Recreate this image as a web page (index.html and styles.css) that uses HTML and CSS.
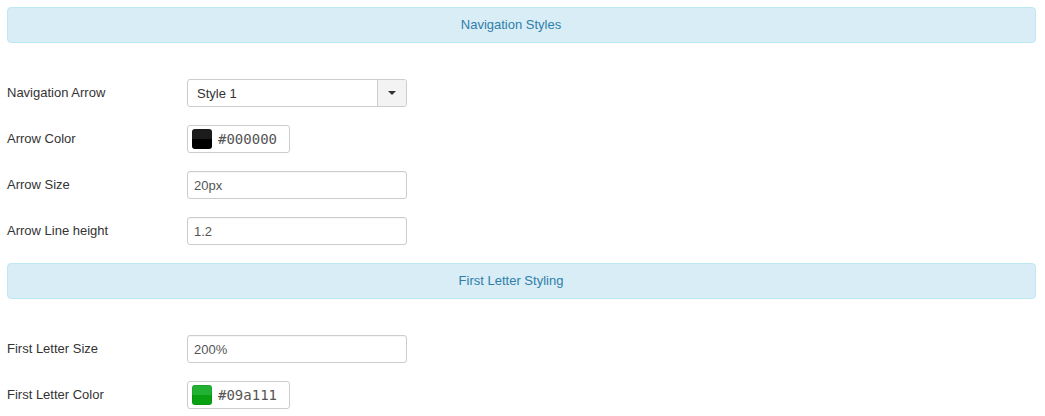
FILE: index.html
```html
<!DOCTYPE html>
<html lang="en">
  <head>
    <meta charset="UTF-8" />
    <meta name="viewport" content="width=device-width, initial-scale=1.0" />
    <title>Module Options</title>
    <link rel="stylesheet" href="styles.css">
  </head>
  <body>
    <div class="options">
      <div class="section-title">Navigation Styles</div>

      <div class="control-group">
        <label class="control-label">Navigation Arrow</label>
        <div class="controls">
          <div class="select-box">
            <span class="select-value">Style 1</span>
            <span class="select-btn"><span class="caret"></span></span>
          </div>
        </div>
      </div>

      <div class="control-group">
        <label class="control-label">Arrow Color</label>
        <div class="controls">
          <div class="color-input">
            <span class="swatch swatch-black"></span>
            <span class="color-value">#000000</span>
          </div>
        </div>
      </div>

      <div class="control-group">
        <label class="control-label">Arrow Size</label>
        <div class="controls">
          <input class="text-input" type="text" value="20px" />
        </div>
      </div>

      <div class="control-group">
        <label class="control-label">Arrow Line height</label>
        <div class="controls">
          <input class="text-input" type="text" value="1.2" />
        </div>
      </div>

      <div class="section-title">First Letter Styling</div>

      <div class="control-group">
        <label class="control-label">First Letter Size</label>
        <div class="controls">
          <input class="text-input" type="text" value="200%" />
        </div>
      </div>

      <div class="control-group">
        <label class="control-label">First Letter Color</label>
        <div class="controls">
          <div class="color-input">
            <span class="swatch swatch-green"></span>
            <span class="color-value">#09a111</span>
          </div>
        </div>
      </div>
    </div>
  </body>
</html>
```

FILE: styles.css
```css
body {
  font-family: "Liberation Sans", Arial, sans-serif;
  font-size: 13px;
  color: #333;
  background: #fff;
  margin: 0;
  padding: 0;
}
.options {
  padding: 7px 9px 0 7px;
}
.section-title {
  height: 36px;
  box-sizing: border-box;
  display: flex;
  align-items: center;
  justify-content: center;
  padding: 0 21px 1px 0;
  background-color: #d9edf7;
  border: 1px solid #bce8f1;
  border-radius: 4px;
  color: #2f7ea8;
  margin-bottom: 36px;
}
.control-group {
  display: flex;
  align-items: center;
  margin-bottom: 18px;
}
.control-label {
  width: 180px;
  flex: none;
  padding-bottom: 1px;
}
.controls {
  display: flex;
}
.select-box {
  width: 220px;
  height: 28px;
  box-sizing: border-box;
  display: flex;
  border: 1px solid #ccc;
  border-radius: 3px;
  background: #fff;
  overflow: hidden;
}
.select-value {
  flex: 1;
  display: flex;
  align-items: center;
  padding-left: 9px;
  color: #333;
}
.select-btn {
  width: 28px;
  display: flex;
  align-items: center;
  justify-content: center;
  background: #f3f3f3;
  border-left: 1px solid #ccc;
}
.caret {
  width: 0;
  height: 0;
  border-left: 4px solid transparent;
  border-right: 4px solid transparent;
  border-top: 4px solid #333;
}
.color-input {
  width: 103px;
  height: 28px;
  box-sizing: border-box;
  display: flex;
  align-items: center;
  gap: 6px;
  padding-left: 4px;
  border: 1px solid #ccc;
  border-radius: 3px;
}
.swatch {
  width: 20px;
  height: 20px;
  border-radius: 3px;
  box-shadow: inset 0 0 0 1px rgba(0, 0, 0, 0.08);
}
.swatch-black {
  background: linear-gradient(to bottom, #1c1c1c 50%, #000 50%);
}
.swatch-green {
  background: linear-gradient(to bottom, #22b133 50%, #09a111 50%);
}
.color-value {
  font-family: "DejaVu Sans Mono", monospace;
  font-size: 14px;
  color: #555;
}
.text-input {
  width: 220px;
  height: 28px;
  box-sizing: border-box;
  margin: 0;
  padding: 4px 6px;
  border: 1px solid #ccc;
  border-radius: 3px;
  font-family: "Liberation Sans", Arial, sans-serif;
  font-size: 13px;
  color: #555;
  box-shadow: inset 0 1px 1px rgba(0, 0, 0, 0.04);
}
```
